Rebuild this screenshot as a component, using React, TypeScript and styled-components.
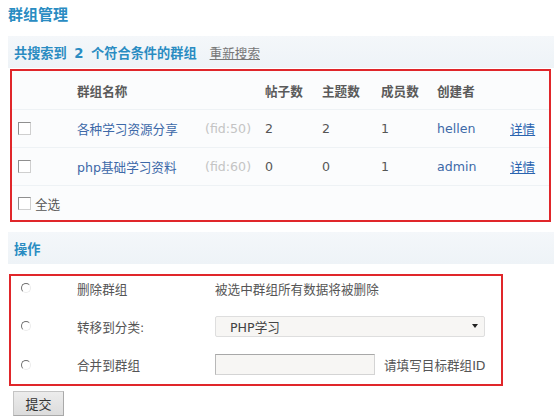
import React from "react";
import styled, { createGlobalStyle } from "styled-components";

const GlobalStyle = createGlobalStyle`
  html, body { margin: 0; padding: 0; background: #fff; }
  body {
    font-family: "DejaVu Sans", "Noto Sans CJK SC", sans-serif;
    font-size: 12.6px;
    color: #555;
  }
  * { box-sizing: border-box; }
`;

const Page = styled.div`
  width: 554px;
  height: 418px;
  padding: 0 0 0 8px;
  overflow: hidden;
`;

const Title = styled.h1`
  margin: 0;
  height: 36px;
  padding-top: 4px;
  font-size: 15px;
  font-weight: bold;
  color: #2a8cc2;
  line-height: 22px;
`;

const Bar = styled.div`
  height: 32px;
  background: linear-gradient(#f4f7fa, #eef3f7);
  display: flex;
  align-items: center;
  padding-left: 6px;
  gap: 13px;
  font-size: 12.6px;
`;

const BarTitle = styled.span`
  font-size: 13.2px;
  font-weight: bold;
  color: #2a8cc2;
  word-spacing: 3px;
`;

const PlainLink = styled.a`
  color: #777;
  text-decoration: underline;
`;

const Box = styled.div<{ $w: number }>`
  width: ${(p) => p.$w}px;
  border: 2px solid #e0262a;
  background: #fbfcfd;
`;

const TableBox = styled(Box)`
  margin-left: 2px;
  margin-top: 1px;
`;

const TRow = styled.div<{ $h: number; $line?: boolean }>`
  display: grid;
  grid-template-columns: 65px 128px 60px 57px 59px 56px 73px 1fr;
  height: ${(p) => p.$h}px;
  align-items: center;
  border-bottom: ${(p) => (p.$line ? "1px solid #eef2f5" : "none")};
`;

const Head = styled.span`
  font-weight: bold;
  color: #5a5a5a;
`;

const Cell = styled.span`
  color: #555;
`;

const BlueText = styled.span`
  color: #3d69a8;
`;

const Fid = styled.span`
  color: #c4c4c4;
`;

const Detail = styled.a`
  color: #2a64b0;
  text-decoration: underline;
`;

const CheckCell = styled.span`
  display: flex;
  align-items: center;
  padding-left: 6px;
  gap: 4px;
`;

const Check = styled.span`
  display: inline-block;
  width: 13px;
  height: 13px;
  border: 1px solid #cfcfcf;
  border-top-color: #8f8f8f;
  border-left-color: #8f8f8f;
  background: #fff;
`;

const Gap = styled.div<{ $h: number }>`
  height: ${(p) => p.$h}px;
`;

const OpBox = styled(Box)`
  margin-left: 1px;
  background: #fff;
`;

const ORow = styled.div<{ $h: number; $pb?: number }>`
  display: grid;
  grid-template-columns: 66px 138px 1fr;
  height: ${(p) => p.$h}px;
  padding-bottom: ${(p) => p.$pb ?? 0}px;
  align-items: center;
`;

const RadioCell = styled.span`
  padding-left: 10px;
  display: flex;
  align-items: center;
`;

const Radio = styled.span`
  display: inline-block;
  width: 10px;
  height: 10px;
  border-radius: 50%;
  border: 1px solid #ececec;
  border-top-color: #6f6f6f;
  border-left-color: #6f6f6f;
  background: #fff;
`;

const Field = styled.span`
  display: flex;
  align-items: center;
  gap: 9px;
`;

const Select = styled.div`
  width: 270px;
  height: 21px;
  border: 1px solid #dedede;
  border-radius: 2px;
  background: #f7f6f4;
  display: flex;
  align-items: center;
  justify-content: space-between;
  padding: 0 6px 0 14px;
  color: #444;
`;

const Arrow = styled.span`
  width: 0;
  height: 0;
  border-left: 3.5px solid transparent;
  border-right: 3.5px solid transparent;
  border-top: 4px solid #222;
`;

const Input = styled.div`
  width: 160px;
  height: 21px;
  border: 1px solid #d4d4d4;
  border-top-color: #a8a8a8;
  border-left-color: #b8b8b8;
  background: #f7f6f4;
`;

const Button = styled.button`
  margin-left: 5px;
  width: 51px;
  height: 25px;
  font-family: inherit;
  font-size: 13px;
  color: #333;
  background: linear-gradient(#ececec, #dcdcdc);
  border: 1px solid #c4c4c4;
  border-bottom-color: #a9a9a9;
  border-right-color: #a9a9a9;
  padding: 0;
`;

const groups = [
  { name: "各种学习资源分享", fid: 50, posts: 2, topics: 2, members: 1, owner: "hellen" },
  { name: "php基础学习资料", fid: 60, posts: 0, topics: 0, members: 1, owner: "admin" },
];

export default function App() {
  return (
    <>
      <GlobalStyle />
      <Page>
        <Title>群组管理</Title>
        <Bar>
          <BarTitle>共搜索到 2 个符合条件的群组</BarTitle>
          <PlainLink>重新搜索</PlainLink>
        </Bar>
        <TableBox $w={541}>
          <TRow $h={39} $line>
            <span />
            <Head>群组名称</Head>
            <span />
            <Head>帖子数</Head>
            <Head>主题数</Head>
            <Head>成员数</Head>
            <Head>创建者</Head>
            <span />
          </TRow>
          {groups.map((g) => (
            <TRow key={g.fid} $h={38} $line>
              <CheckCell>
                <Check />
              </CheckCell>
              <BlueText>{g.name}</BlueText>
              <Fid>(fid:{g.fid})</Fid>
              <Cell>{g.posts}</Cell>
              <Cell>{g.topics}</Cell>
              <Cell>{g.members}</Cell>
              <BlueText>{g.owner}</BlueText>
              <Detail>详情</Detail>
            </TRow>
          ))}
          <TRow $h={34}>
            <CheckCell>
              <Check />
              <Cell>全选</Cell>
            </CheckCell>
          </TRow>
        </TableBox>
        <Gap $h={10} />
        <Bar>
          <BarTitle>操作</BarTitle>
        </Bar>
        <Gap $h={10} />
        <OpBox $w={494}>
          <ORow $h={31} $pb={7}>
            <RadioCell>
              <Radio />
            </RadioCell>
            <Cell>删除群组</Cell>
            <Cell>被选中群组所有数据将被删除</Cell>
          </ORow>
          <ORow $h={38}>
            <RadioCell>
              <Radio />
            </RadioCell>
            <Cell>转移到分类:</Cell>
            <Field>
              <Select>
                <span>PHP学习</span>
                <Arrow />
              </Select>
            </Field>
          </ORow>
          <ORow $h={39}>
            <RadioCell>
              <Radio />
            </RadioCell>
            <Cell>合并到群组</Cell>
            <Field>
              <Input />
              <Cell>请填写目标群组ID</Cell>
            </Field>
          </ORow>
        </OpBox>
        <Gap $h={5} />
        <Button>提交</Button>
      </Page>
    </>
  );
}
